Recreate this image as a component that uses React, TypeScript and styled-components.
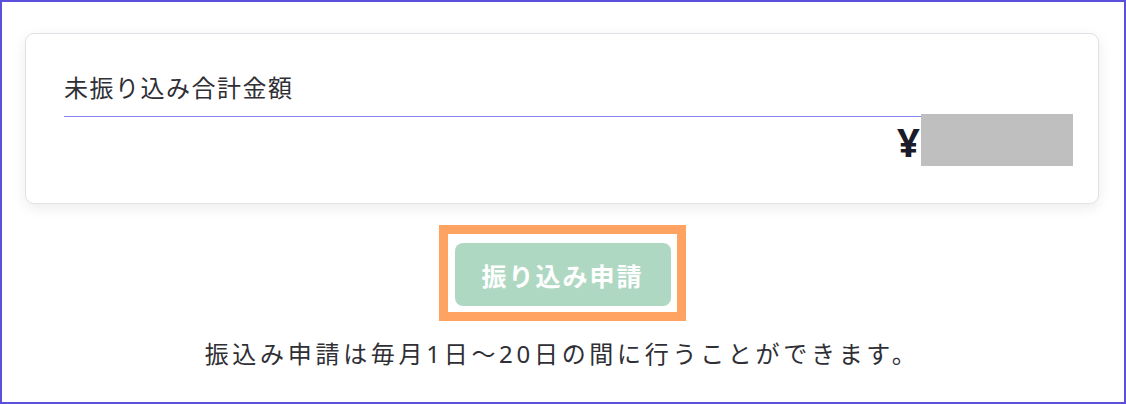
import styled, { createGlobalStyle } from "styled-components";

const GlobalStyle = createGlobalStyle`
  html, body {
    margin: 0;
    padding: 0;
    background: #ffffff;
  }
  body {
    font-family: "Noto Sans", "Noto Sans CJK JP", sans-serif;
    color: #333333;
  }
`;

const Frame = styled.div`
  box-sizing: border-box;
  width: 1126px;
  height: 404px;
  border: 2px solid #5b50dc;
  padding: 31px 25px 0 23px;
  display: flex;
  flex-direction: column;
  align-items: center;
`;

const Card = styled.section`
  box-sizing: border-box;
  width: 100%;
  height: 171px;
  background: #ffffff;
  border: 1px solid #dfe2e7;
  border-radius: 9px;
  box-shadow: 0 4px 14px rgba(0, 0, 0, 0.08);
  padding: 36px 38px 0 38px;
`;

const FieldLabel = styled.div`
  font-size: 24px;
  line-height: 36px;
  letter-spacing: 1.5px;
  color: #2f2f35;
  padding-bottom: 10px;
  border-bottom: 1px solid #8585f2;
`;

const AmountRow = styled.div`
  display: flex;
  justify-content: flex-end;
  align-items: center;
  margin-top: -3px;
  margin-right: -13px;
`;

const Yen = styled.span`
  font-family: "Noto Sans", sans-serif;
  font-size: 40px;
  font-weight: 700;
  line-height: 1;
  color: #1b1c2b;
  margin-top: 3px;
  margin-right: 1px;
`;

const Redacted = styled.div`
  width: 152px;
  height: 52px;
  background: #bfbfbf;
`;

const Highlight = styled.div`
  margin-top: 21px;
  border: 9px solid #ffa363;
  padding: 9px 6px 6px 7px;
  background: #ffffff;
`;

const SubmitButton = styled.button<{ $disabled?: boolean }>`
  width: 216px;
  height: 63px;
  border: none;
  border-radius: 8px;
  background: ${(p) => (p.$disabled ? "#afd8c3" : "#3aa876")};
  color: #ffffff;
  font-family: "Noto Sans", "Noto Sans CJK JP", sans-serif;
  font-size: 25px;
  font-weight: 700;
  letter-spacing: 2px;
  display: flex;
  align-items: center;
  justify-content: center;
  cursor: ${(p) => (p.$disabled ? "default" : "pointer")};
`;

const Note = styled.p`
  margin: 16px 0 0;
  font-size: 24px;
  line-height: 33px;
  letter-spacing: 3.7px;
  color: #2f2f35;
`;

export default function App() {
  return (
    <>
      <GlobalStyle />
      <Frame>
        <Card>
          <FieldLabel>未振り込み合計金額</FieldLabel>
          <AmountRow>
            <Yen>¥</Yen>
            <Redacted />
          </AmountRow>
        </Card>
        <Highlight>
          <SubmitButton $disabled>振り込み申請</SubmitButton>
        </Highlight>
        <Note>振込み申請は毎月1日～20日の間に行うことができます。</Note>
      </Frame>
    </>
  );
}
